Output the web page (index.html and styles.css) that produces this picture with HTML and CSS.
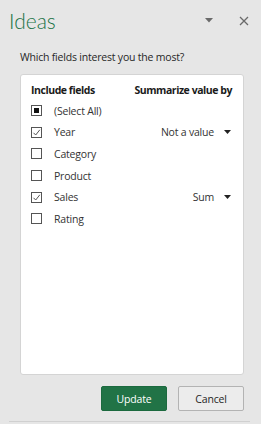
FILE: index.html
```html
<!DOCTYPE html>
<html>
<head>
<meta charset="utf-8">
<link rel="stylesheet" href="styles.css">
</head>
<body>
<div class="pane">
  <div class="header">
    <h1 class="title">Ideas</h1>
    <div class="header-icons">
      <svg class="hdr-caret" width="8" height="5" viewBox="0 0 8 5"><path d="M0 0H8L4 4.5Z" fill="#6a6a6a"/></svg>
      <svg class="hdr-close" width="10" height="10" viewBox="0 0 10 10"><path d="M1 1L9 9M9 1L1 9" stroke="#6a6a6a" stroke-width="1.3"/></svg>
    </div>
  </div>
  <p class="question">Which fields interest you the most?</p>
  <div class="card">
    <div class="row head">
      <span class="col-a">Include fields</span>
      <span class="col-b">Summarize value by</span>
    </div>
    <div class="row">
      <span class="box mixed"><span class="fill"></span></span>
      <span class="label">(Select All)</span>
    </div>
    <div class="row">
      <span class="box"><svg width="9" height="9" viewBox="0 0 9 9"><path d="M1.5 4.8L3.7 7L7.8 1.8" fill="none" stroke="#555" stroke-width="1"/></svg></span>
      <span class="label">Year</span>
      <span class="summ">Not a value<svg class="caret" width="7" height="4" viewBox="0 0 7 4"><path d="M0 0H7L3.5 4Z" fill="#222"/></svg></span>
    </div>
    <div class="row">
      <span class="box"></span>
      <span class="label">Category</span>
    </div>
    <div class="row">
      <span class="box"></span>
      <span class="label">Product</span>
    </div>
    <div class="row">
      <span class="box"><svg width="9" height="9" viewBox="0 0 9 9"><path d="M1.5 4.8L3.7 7L7.8 1.8" fill="none" stroke="#555" stroke-width="1"/></svg></span>
      <span class="label">Sales</span>
      <span class="summ">Sum<svg class="caret" width="7" height="4" viewBox="0 0 7 4"><path d="M0 0H7L3.5 4Z" fill="#222"/></svg></span>
    </div>
    <div class="row">
      <span class="box"></span>
      <span class="label">Rating</span>
    </div>
  </div>
  <div class="actions">
    <button class="btn primary">Update</button>
    <button class="btn">Cancel</button>
  </div>
  <div class="rule"></div>
</div>
</body>
</html>
```
FILE: styles.css
```css
html, body {
  margin: 0;
  padding: 0;
  background: #e6e6e6;
}
body {
  width: 261px;
  height: 424px;
  overflow: hidden;
  font-family: "Open Sans", "Noto Sans", sans-serif;
  color: #262626;
  letter-spacing: -0.2px;
}
.pane {
  display: flex;
  flex-direction: column;
  height: 424px;
}
.header {
  display: flex;
  align-items: center;
  justify-content: space-between;
  height: 40px;
  padding: 0 12px 0 9px;
}
.title {
  margin: 0;
  font-family: "Lato", sans-serif;
  font-weight: 300;
  font-size: 21px;
  letter-spacing: 0;
  color: #217346;
  line-height: 24px;
  padding-top: 2px;
}
.header-icons {
  display: flex;
  align-items: center;
  gap: 26px;
  padding-top: 1px;
}
.question {
  margin: 10px 0 0 20px;
  font-size: 10.5px;
  line-height: 15px;
  color: #262626;
}
.card {
  margin: 9px 17px 0 20px;
  height: 293px;
  background: #fff;
  border: 1px solid #d4d4d4;
  border-radius: 3px;
  padding: 6px 11px 0 10px;
  display: flex;
  flex-direction: column;
}
.row {
  display: flex;
  align-items: center;
  height: 21.6px;
  font-size: 10.5px;
}
.row.head {
  font-weight: 700;
  letter-spacing: -0.45px;
  height: 17px;
  margin-bottom: 2px;
  justify-content: space-between;
  color: #1a1a1a;
}
.box {
  width: 9px;
  height: 9px;
  border: 1px solid #555;
  display: flex;
  align-items: center;
  justify-content: center;
  flex: none;
}
.box svg { display: block; }
.box .fill {
  width: 5px;
  height: 5px;
  background: #111;
}
.label {
  margin-left: 12px;
  color: #333;
}
.summ {
  margin-left: auto;
  display: flex;
  align-items: center;
  color: #333;
}
.caret {
  margin-left: 10px;
  margin-right: 1px;
}
.actions {
  display: flex;
  justify-content: flex-end;
  gap: 11px;
  margin: 11px 17px 0 0;
}
.btn {
  width: 66px;
  height: 25px;
  font-family: "Open Sans", "Noto Sans", sans-serif;
  font-size: 10.5px;
  letter-spacing: -0.2px;
  border: 1px solid #b3b3b3;
  background: #ececec;
  color: #262626;
  border-radius: 2px;
  padding: 0;
}
.btn.primary {
  background: #217346;
  border-color: #1c6a3f;
  color: #fff;
}
.rule {
  margin: 10px 11px 0 9px;
  border-top: 1px solid #d0d0d0;
}
```
